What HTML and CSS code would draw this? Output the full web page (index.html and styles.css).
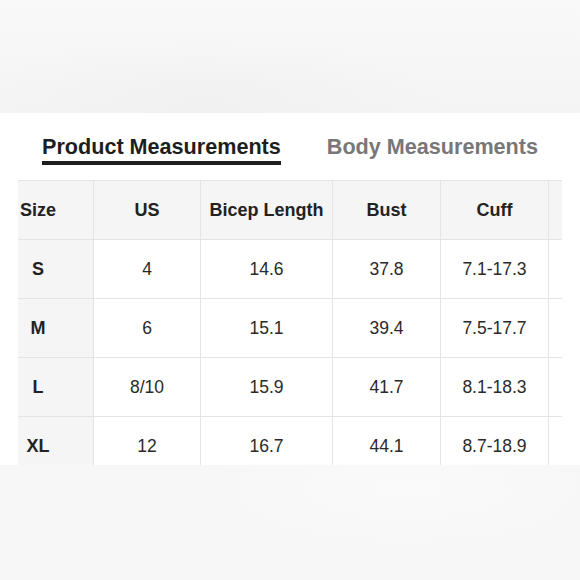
FILE: index.html
```html
<!DOCTYPE html>
<html lang="en">
<head>
<meta charset="utf-8">
<title>Size Guide</title>
<link rel="stylesheet" href="styles.css">
</head>
<body>
<div class="page">
  <div class="backdrop-top"></div>
  <section class="panel">
    <nav class="tabs">
      <span class="tab tab-active">Product Measurements</span>
      <span class="tab">Body Measurements</span>
    </nav>
    <div class="table-scroll">
      <table class="sizes">
        <colgroup>
          <col class="c-size"><col class="c-us"><col class="c-bicep"><col class="c-bust"><col class="c-cuff"><col class="c-len">
        </colgroup>
        <thead>
          <tr><th class="size-cell">Size</th><th>US</th><th>Bicep Length</th><th>Bust</th><th>Cuff</th><th></th></tr>
        </thead>
        <tbody>
          <tr><th class="size-cell">S</th><td>4</td><td>14.6</td><td>37.8</td><td>7.1-17.3</td><td></td></tr>
          <tr><th class="size-cell">M</th><td>6</td><td>15.1</td><td>39.4</td><td>7.5-17.7</td><td></td></tr>
          <tr><th class="size-cell">L</th><td>8/10</td><td>15.9</td><td>41.7</td><td>8.1-18.3</td><td></td></tr>
          <tr><th class="size-cell">XL</th><td>12</td><td>16.7</td><td>44.1</td><td>8.7-18.9</td><td></td></tr>
        </tbody>
      </table>
    </div>
  </section>
  <div class="backdrop-bottom"></div>
</div>
</body>
</html>
```

FILE: styles.css
```css
* { box-sizing: border-box; }

html, body {
  margin: 0;
  padding: 0;
  width: 580px;
  height: 580px;
  overflow: hidden;
  background: #f8f8f8;
  font-family: "Liberation Sans", Arial, Helvetica, sans-serif;
}

.page {
  display: flex;
  flex-direction: column;
  width: 580px;
  height: 580px;
}

.backdrop-top {
  height: 113px;
  flex: none;
  background:
    radial-gradient(ellipse 60% 90% at 35% 95%, #f1f1f1 0%, rgba(241,241,241,0) 70%),
    linear-gradient(180deg, #f9f9f9 0%, #f4f4f4 100%);
}

.panel {
  flex: none;
  height: 352px;
  background: #ffffff;
  overflow: hidden;
  padding-top: 21px;
}

.tabs {
  display: flex;
  gap: 46px;
  padding-left: 42px;
}

.tab {
  font-size: 21.6px;
  line-height: 25px;
  font-weight: bold;
  color: #777777;
  padding-bottom: 2px;
  border-bottom: 4px solid transparent;
}

.tab-active {
  color: #1e1e1e;
  border-bottom-color: #1e1e1e;
}

.table-scroll {
  margin-top: 15px;
  margin-left: 18px;
  width: 544px;
  overflow: hidden;
}

.sizes {
  border-collapse: separate;
  border-spacing: 0;
  table-layout: fixed;
  width: 639px;
}

.c-size { width: 76px; }
.c-us { width: 107px; }
.c-bicep { width: 132px; }
.c-bust { width: 108px; }
.c-cuff { width: 108px; }
.c-len { width: 108px; }

.sizes th,
.sizes td {
  padding: 0;
  text-align: center;
  vertical-align: middle;
  border-right: 1px solid #e4e4e4;
  border-bottom: 1px solid #e4e4e4;
  color: #2a2a2a;
  white-space: nowrap;
}

.sizes thead th {
  height: 60px;
  border-top: 1px solid #e4e4e4;
  background: #f5f5f5;
  font-size: 18px;
  font-weight: bold;
  color: #222222;
}

.sizes tbody td,
.sizes tbody th {
  height: 59px;
}

.sizes tbody td {
  font-size: 17.5px;
  font-weight: normal;
}

.sizes .size-cell {
  background: #f5f5f5;
  padding-right: 35px;
  font-size: 18px;
  font-weight: bold;
  color: #222222;
}

.backdrop-bottom {
  flex: 1;
  background:
    radial-gradient(ellipse 50% 80% at 70% 20%, #fafafa 0%, rgba(250,250,250,0) 70%),
    #f7f7f7;
}
```
